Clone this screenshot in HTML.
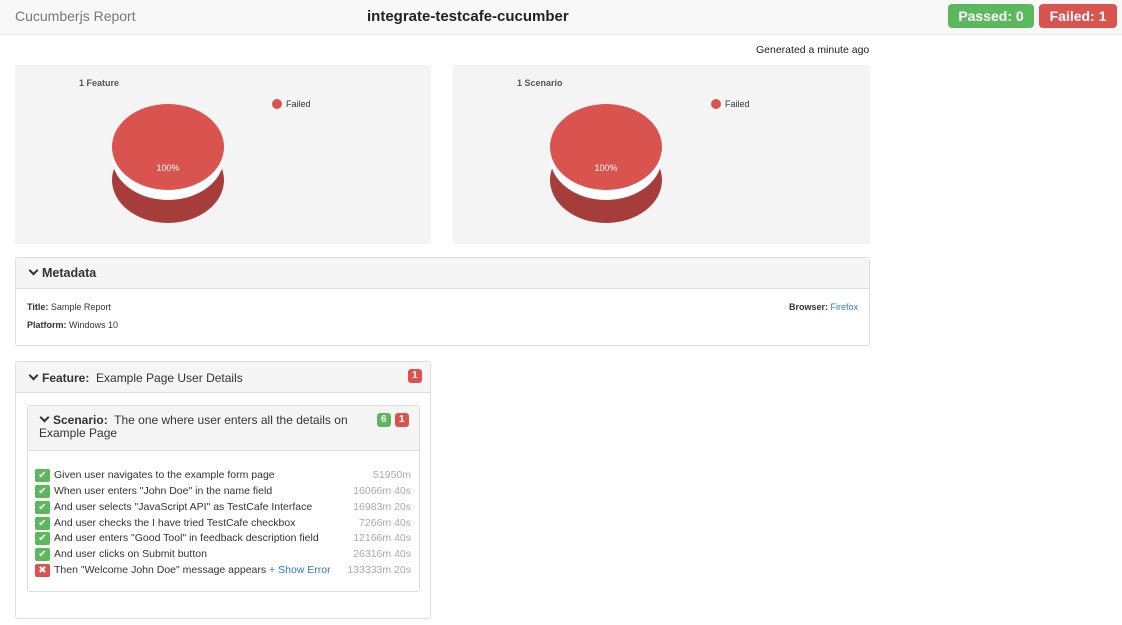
<!DOCTYPE html>
<html><head><style>
*{box-sizing:border-box}
body{margin:0;width:1122px;height:625px;background:#fff;font-family:"Liberation Sans",Arial,sans-serif;color:#333;position:relative;overflow:hidden}
.a{position:absolute}
.nav{left:0;top:0;width:1122px;height:35px;background:#f8f8f8;border-bottom:1px solid #e7e7e7}
.badge{color:#fff;font-weight:bold;font-size:14px;border-radius:4px;height:24px;line-height:24px;top:4px;text-align:center}
.panel{border:1px solid #ddd;border-radius:3px;background:#fff}
.ph{background:#f5f5f5;border-bottom:1px solid #ddd}
.lbl{color:#fff;font-size:10px;font-weight:bold;border-radius:3px;height:14px;line-height:14px;padding:0 4px}
.step{left:35px;font-size:10.5px;height:15px;line-height:15px;width:376px}
.ic{display:inline-block;width:15px;height:13px;border-radius:2px;background:#5cb85c;color:#fff;font-size:10px;text-align:center;line-height:13px;vertical-align:middle;margin-right:4px}
.t{position:absolute;right:0;top:0;color:#aaa}
.chev{display:inline-block;width:7px;height:7px;border-right:2.5px solid #333;border-bottom:2.5px solid #333;transform:rotate(45deg);margin:0 5px 3px 2px}
</style></head><body>
<div class="a nav"></div>
<div class="a" style="left:15px;top:8px;font-size:14px;color:#777">Cucumberjs Report</div>
<div class="a" style="left:367px;top:8px;font-size:15px;font-weight:bold;color:#222">integrate-testcafe-cucumber</div>
<div class="a badge" style="left:948px;width:86px;background:#5cb85c">Passed: 0</div>
<div class="a badge" style="left:1039px;width:78px;background:#d9534f">Failed: 1</div>
<div class="a" style="left:756px;top:44px;font-size:10.5px;color:#222">Generated a minute ago</div>

<div class="a" style="left:15px;top:65px;width:416px;height:179px;background:#f4f4f4"></div>
<div class="a" style="left:453px;top:65px;width:417px;height:179px;background:#f4f4f4"></div>
<svg class="a" style="left:0;top:60px" width="900" height="190">
<g font-family="Liberation Sans,Arial" font-size="9">
<text x="79" y="26" font-weight="bold" fill="#555">1 Feature</text>
<circle cx="277" cy="44" r="5" fill="#d9534f"/><text x="286" y="47" fill="#333">Failed</text>
<ellipse cx="168" cy="120" rx="56" ry="43" fill="#a73d3b"/>
<ellipse cx="168" cy="97" rx="56" ry="43" fill="#fff"/>
<ellipse cx="168" cy="87" rx="56" ry="43" fill="#d9534f"/>
<text x="168" y="111" text-anchor="middle" fill="#fff">100%</text>
<text x="517" y="26" font-weight="bold" fill="#555">1 Scenario</text>
<circle cx="716" cy="44" r="5" fill="#d9534f"/><text x="725" y="47" fill="#333">Failed</text>
<ellipse cx="606" cy="120" rx="56" ry="43" fill="#a73d3b"/>
<ellipse cx="606" cy="97" rx="56" ry="43" fill="#fff"/>
<ellipse cx="606" cy="87" rx="56" ry="43" fill="#d9534f"/>
<text x="606" y="111" text-anchor="middle" fill="#fff">100%</text>
</g></svg>

<div class="a panel" style="left:15px;top:257px;width:855px;height:89px">
<div class="ph" style="height:31px;padding:8px 12px;font-size:12.5px;font-weight:bold"><span class="chev"></span>Metadata</div>
<div class="a" style="left:11px;top:44px;font-size:9px"><b>Title:</b> Sample Report</div>
<div class="a" style="left:11px;top:62px;font-size:9px"><b>Platform:</b> Windows 10</div>
<div class="a" style="right:11px;top:44px;font-size:9px"><b>Browser:</b> <span style="color:#337ab7">Firefox</span></div>
</div>

<div class="a panel" style="left:15px;top:361px;width:416px;height:258px">
<div class="ph" style="height:31px;padding:9px 12px;font-size:12px"><b><span class="chev"></span>Feature:</b>&nbsp; Example Page User Details</div>
<div class="a lbl" style="left:392px;top:7px;background:#d9534f">1</div>
<div class="a panel" style="left:11px;top:43px;width:393px;height:187px">
<div class="ph" style="height:45px;padding:8px 60px 8px 11px;font-size:12px;line-height:13px"><b><span class="chev"></span>Scenario:</b>&nbsp; The one where user enters all the details on Example Page</div>
<div class="a lbl" style="left:349px;top:7px;background:#5cb85c">6</div>
<div class="a lbl" style="left:367px;top:7px;background:#d9534f">1</div>
</div>
</div>
<div class="a step" style="top:468px"><span class="ic">&#10004;</span>Given user navigates to the example form page<span class="t">51950m</span></div>
<div class="a step" style="top:484px"><span class="ic">&#10004;</span>When user enters "John Doe" in the name field<span class="t">16066m 40s</span></div>
<div class="a step" style="top:500px"><span class="ic">&#10004;</span>And user selects "JavaScript API" as TestCafe Interface<span class="t">16983m 20s</span></div>
<div class="a step" style="top:516px"><span class="ic">&#10004;</span>And user checks the I have tried TestCafe checkbox<span class="t">7266m 40s</span></div>
<div class="a step" style="top:531px"><span class="ic">&#10004;</span>And user enters "Good Tool" in feedback description field<span class="t">12166m 40s</span></div>
<div class="a step" style="top:547px"><span class="ic">&#10004;</span>And user clicks on Submit button<span class="t">26316m 40s</span></div>
<div class="a step" style="top:563px"><span class="ic" style="background:#d9534f">&#10006;</span>Then "Welcome John Doe" message appears <span style="color:#337ab7">+ Show Error</span><span class="t">133333m 20s</span></div>
</body></html>
